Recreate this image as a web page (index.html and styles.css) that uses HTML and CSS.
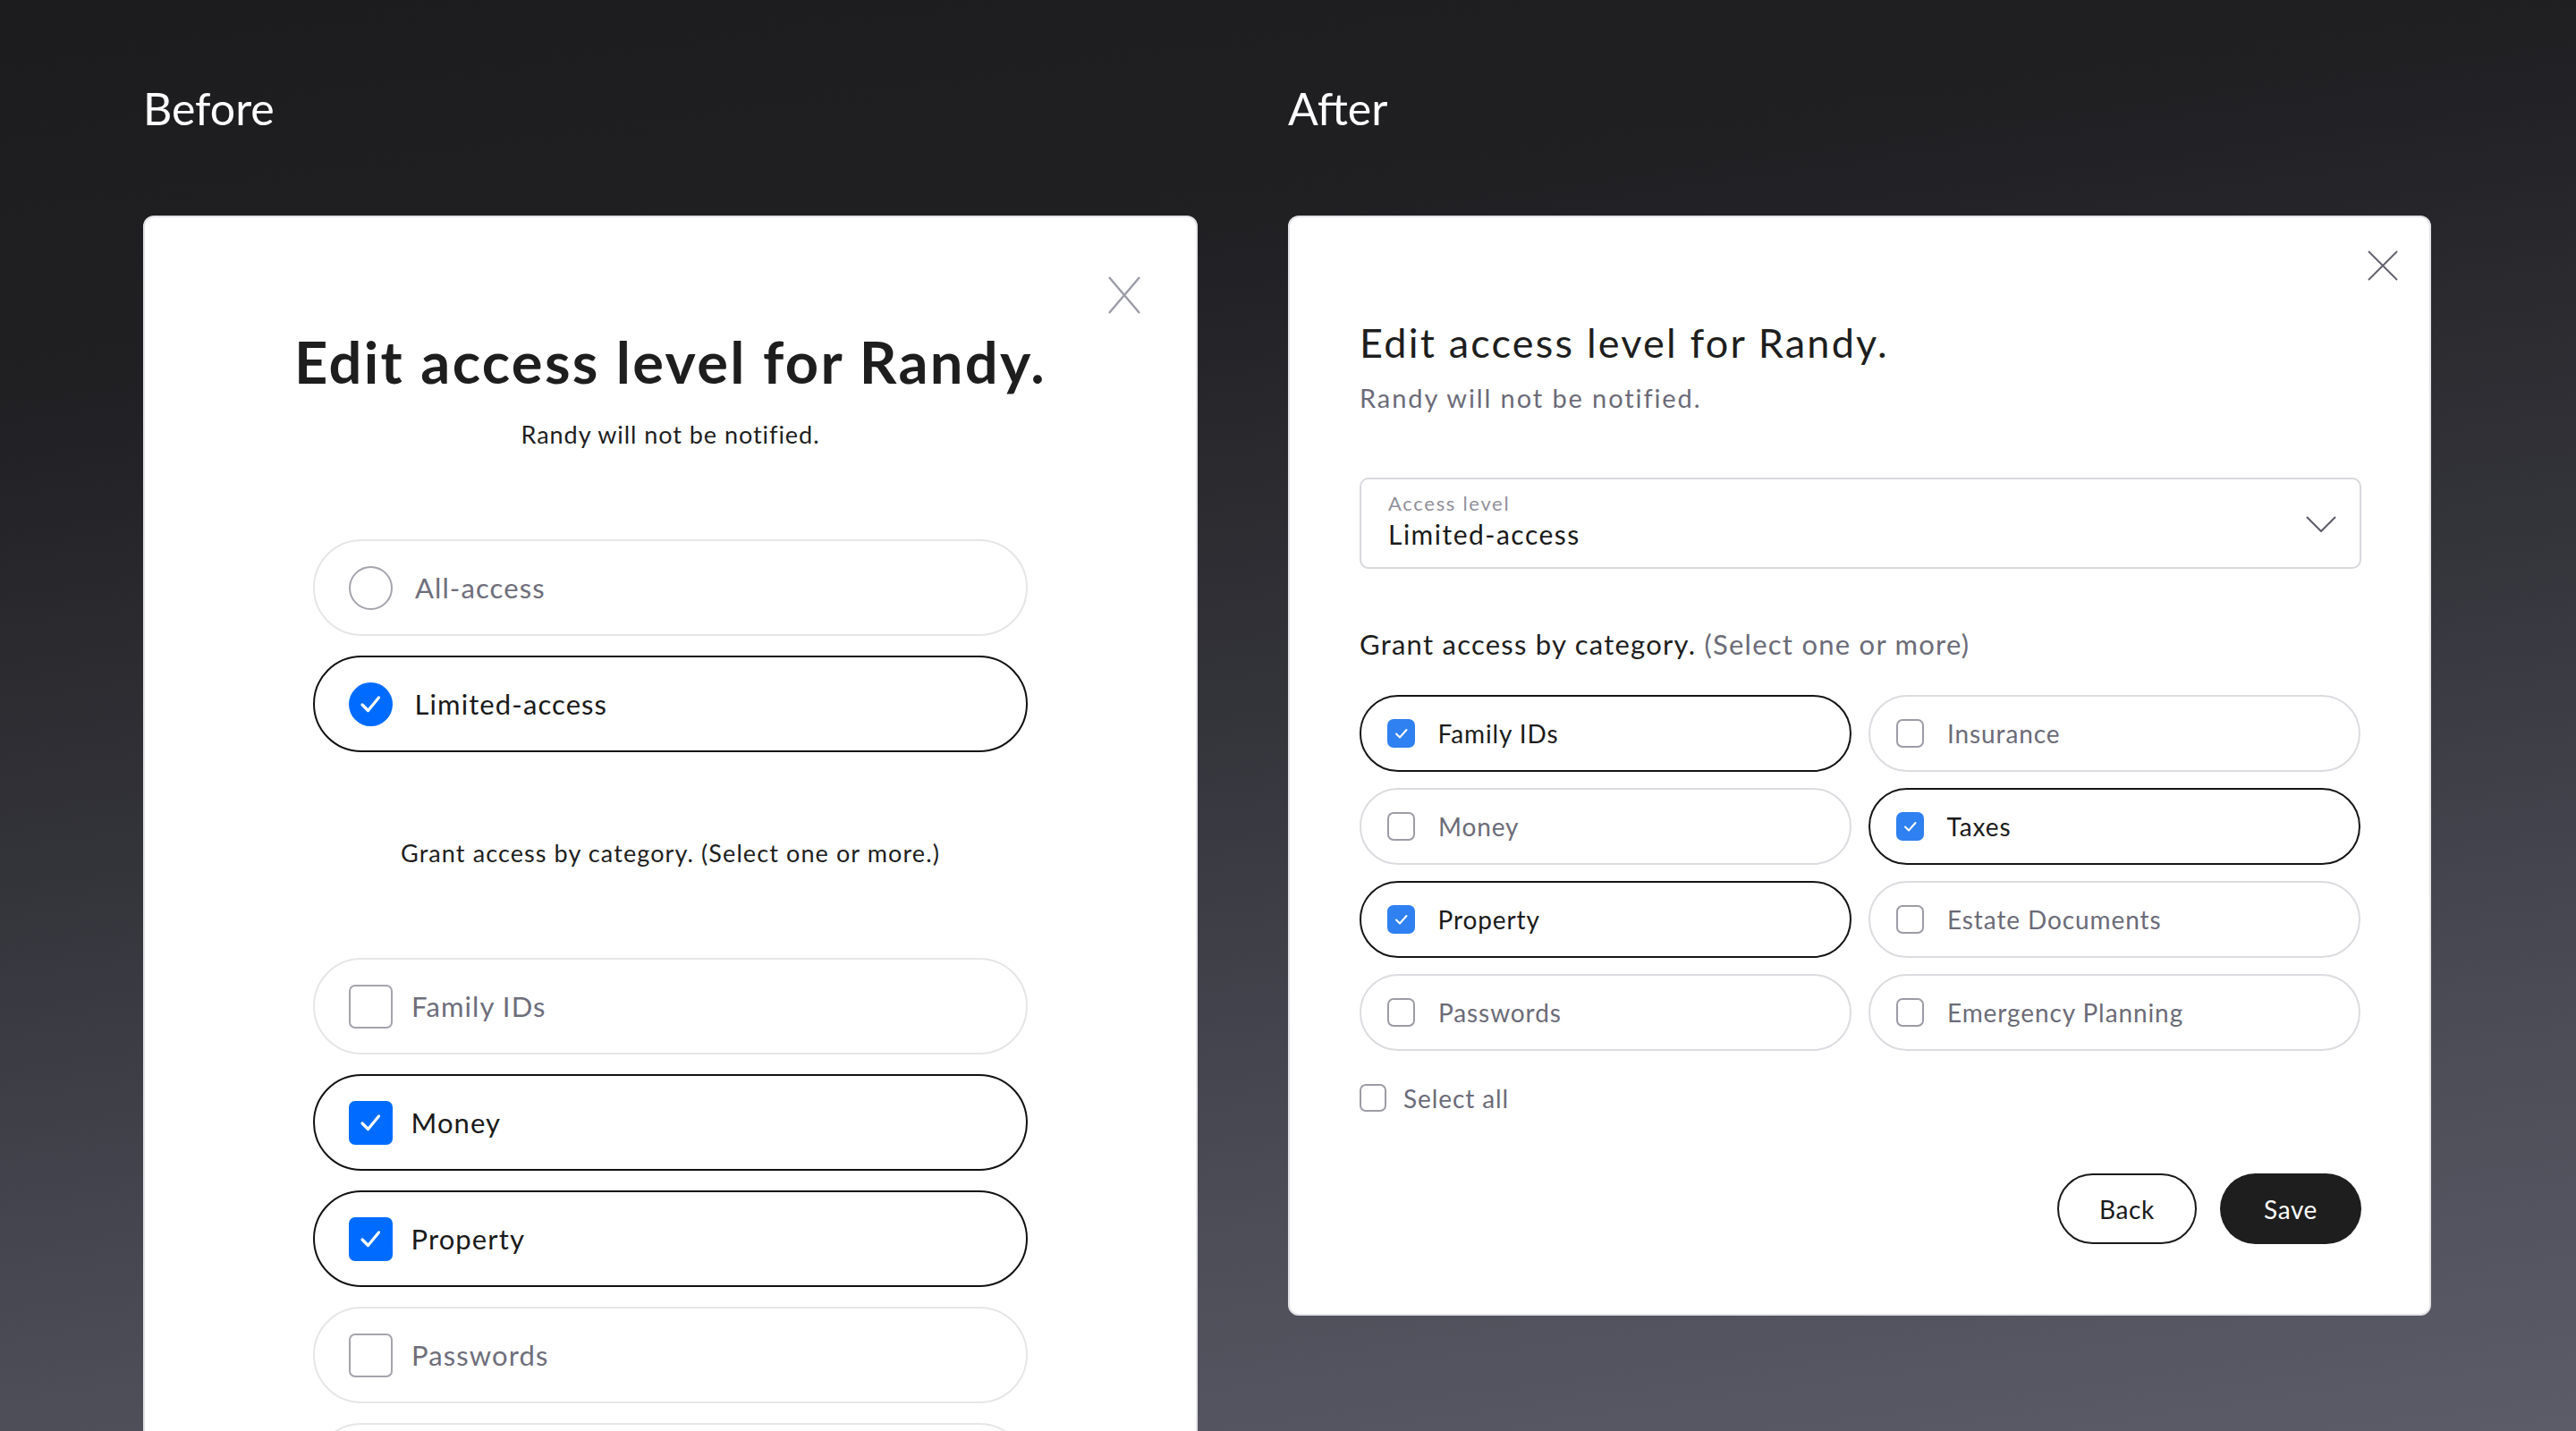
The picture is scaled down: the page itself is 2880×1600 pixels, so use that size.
FILE: index.html
```html
<!DOCTYPE html>
<html lang="en">
<head>
<meta charset="utf-8">
<title>Edit access level</title>
<link rel="stylesheet" href="styles.css">
</head>
<body>
<div class="page">
  <section class="col col-before">
    <h2 class="col-label">Before</h2>
    <div class="card card-before">
      <button class="close close-before" aria-label="Close">
        <svg viewBox="0 0 36 42" width="36" height="42"><path d="M1 1 L35 41 M35 1 L1 41" fill="none" stroke="#9b9ca7" stroke-width="2.4"/></svg>
      </button>
      <h1 class="b-title">Edit access level for Randy.</h1>
      <p class="b-sub">Randy will not be notified.</p>
      <div class="b-list">
        <div class="b-pill">
          <span class="b-radio"></span><span class="b-text">All-access</span>
        </div>
        <div class="b-pill is-on">
          <span class="b-radio is-on"><svg viewBox="0 0 49 49" width="49" height="49"><path d="M15 25 L21.5 31.5 L33.5 17" fill="none" stroke="#fff" stroke-width="3.2" stroke-linecap="round" stroke-linejoin="round"/></svg></span><span class="b-text">Limited-access</span>
        </div>
      </div>
      <p class="b-grant">Grant access by category. (Select one or more.)</p>
      <div class="b-list">
        <div class="b-pill">
          <span class="b-box"></span><span class="b-text b-text-c">Family IDs</span>
        </div>
        <div class="b-pill is-on">
          <span class="b-box is-on"><svg viewBox="0 0 49 49" width="49" height="49"><path d="M15 25 L21.5 31.5 L33.5 17" fill="none" stroke="#fff" stroke-width="3.2" stroke-linecap="round" stroke-linejoin="round"/></svg></span><span class="b-text b-text-c">Money</span>
        </div>
        <div class="b-pill is-on">
          <span class="b-box is-on"><svg viewBox="0 0 49 49" width="49" height="49"><path d="M15 25 L21.5 31.5 L33.5 17" fill="none" stroke="#fff" stroke-width="3.2" stroke-linecap="round" stroke-linejoin="round"/></svg></span><span class="b-text b-text-c">Property</span>
        </div>
        <div class="b-pill">
          <span class="b-box"></span><span class="b-text b-text-c">Passwords</span>
        </div>
        <div class="b-pill b-pill-edge"></div>
      </div>
    </div>
  </section>

  <section class="col col-after">
    <h2 class="col-label">After</h2>
    <div class="card card-after">
      <button class="close close-after" aria-label="Close">
        <svg viewBox="0 0 34 34" width="34" height="34"><path d="M1 1 L33 33 M33 1 L1 33" fill="none" stroke="#5f5f6b" stroke-width="1.8"/></svg>
      </button>
      <h1 class="a-title">Edit access level for Randy.</h1>
      <p class="a-sub">Randy will not be notified.</p>
      <div class="a-select">
        <div class="a-select-text">
          <span class="a-select-label">Access level</span>
          <span class="a-select-value">Limited-access</span>
        </div>
        <svg class="a-chev" viewBox="0 0 34 18" width="34" height="18"><path d="M1 1 L17 17 L33 1" fill="none" stroke="#5a5a68" stroke-width="2"/></svg>
      </div>
      <p class="a-grant">Grant access by category. <span class="muted">(Select one or more)</span></p>
      <div class="a-grid">
        <div class="a-pill is-on"><span class="a-box is-on"><svg viewBox="0 0 31 32" width="31" height="32"><path d="M10 16.5 L14 20.5 L21.5 12" fill="none" stroke="#fff" stroke-width="2" stroke-linecap="round" stroke-linejoin="round"/></svg></span><span class="a-text">Family IDs</span></div>
        <div class="a-pill"><span class="a-box"></span><span class="a-text">Insurance</span></div>
        <div class="a-pill"><span class="a-box"></span><span class="a-text">Money</span></div>
        <div class="a-pill is-on"><span class="a-box is-on"><svg viewBox="0 0 31 32" width="31" height="32"><path d="M10 16.5 L14 20.5 L21.5 12" fill="none" stroke="#fff" stroke-width="2" stroke-linecap="round" stroke-linejoin="round"/></svg></span><span class="a-text">Taxes</span></div>
        <div class="a-pill is-on"><span class="a-box is-on"><svg viewBox="0 0 31 32" width="31" height="32"><path d="M10 16.5 L14 20.5 L21.5 12" fill="none" stroke="#fff" stroke-width="2" stroke-linecap="round" stroke-linejoin="round"/></svg></span><span class="a-text">Property</span></div>
        <div class="a-pill"><span class="a-box"></span><span class="a-text">Estate Documents</span></div>
        <div class="a-pill"><span class="a-box"></span><span class="a-text">Passwords</span></div>
        <div class="a-pill"><span class="a-box"></span><span class="a-text">Emergency Planning</span></div>
      </div>
      <div class="a-selectall"><span class="a-box a-box-sm"></span><span class="a-text">Select all</span></div>
      <div class="a-actions">
        <button class="btn btn-back">Back</button>
        <button class="btn btn-save">Save</button>
      </div>
    </div>
  </section>
</div>
</body>
</html>
```

FILE: styles.css
```css
* { box-sizing: border-box; }
html, body { margin: 0; padding: 0; }
body {
  width: 2880px;
  height: 1600px;
  overflow: hidden;
  font-family: "Lato", "Noto Sans", sans-serif;
  background: linear-gradient(172deg, #1c1c1e 0%, #202023 22%, #34343b 50%, #4d4d58 78%, #5c5c69 100%);
  color: #1e1e1e;
}
.page {
  display: flex;
  gap: 101px;
  padding-left: 160px;
  height: 1600px;
  overflow: hidden;
}
.col { display: flex; flex-direction: column; }
.col-before { width: 1179px; }
.col-after { width: 1278px; }
.col-label {
  margin: 91px 0 0 0;
  font-size: 50px;
  line-height: 60px;
  font-weight: 400;
  color: #ffffff;
  height: 60px;
}
.card {
  position: relative;
  margin-top: 90px;
  background: #fff;
  border: 2px solid #e3e3e7;
  border-radius: 12px;
}
.close {
  position: absolute;
  background: none;
  border: 0;
  padding: 0;
  display: block;
}
.close svg { display: block; }

/* BEFORE */
.card-before {
  display: flex;
  flex-direction: column;
  align-items: center;
  padding-top: 122px;
  min-height: 1500px;
}
.close-before { top: 66px; right: 62px; }
.b-title {
  margin: 0;
  font-size: 65px;
  line-height: 78px;
  font-weight: 700;
  letter-spacing: 2.35px;
}
.b-sub {
  margin: 27px 0 0;
  font-size: 27px;
  line-height: 32px;
  letter-spacing: 0.95px;
}
.b-list {
  display: flex;
  flex-direction: column;
  gap: 22px;
  width: 799px;
  margin-top: 101px;
}
.b-pill {
  height: 108px;
  border: 2px solid #e6e6e9;
  border-radius: 54px;
  display: flex;
  align-items: center;
  padding-left: 38px;
  flex: none;
}
.b-pill.is-on { border: 2.5px solid #111; padding-left: 37.5px; }
.b-radio, .b-box {
  width: 49px;
  height: 49px;
  border: 2px solid #a4a4ae;
  flex: none;
  display: flex;
  align-items: center;
  justify-content: center;
}
.b-radio { border-radius: 50%; }
.b-box { border-radius: 7px; }
.b-radio.is-on, .b-box.is-on { background: #006cff; border: 0; }
.b-radio svg, .b-box svg { display: block; }
.b-text {
  margin-left: 25px;
  font-size: 31px;
  letter-spacing: 1.1px;
  color: #6e6e7b;
}
.b-text-c { margin-left: 21px; }
.b-pill.is-on .b-text { color: #1a1a1a; }
.b-grant {
  margin: 97px 0 0;
  font-size: 27px;
  line-height: 32px;
  letter-spacing: 1.1px;
}
.b-grant + .b-list { margin-top: 101px; }

/* AFTER */
.card-after {
  height: 1230px;
  padding: 113px 76px 0 78px;
}
.close-after { top: 37px; right: 35px; }
.a-title {
  margin: 0;
  font-size: 45px;
  line-height: 54px;
  font-weight: 400;
  letter-spacing: 2.2px;
}
.a-sub {
  margin: 18px 0 0;
  font-size: 29px;
  line-height: 34px;
  letter-spacing: 1.9px;
  color: #6b6b78;
}
.a-select {
  margin-top: 72px;
  height: 102px;
  border: 2px solid #d8d8dd;
  border-radius: 10px;
  display: flex;
  align-items: center;
  justify-content: space-between;
  padding: 0 26px 0 30px;
}
.a-select-text { display: flex; flex-direction: column; padding-bottom: 5px; }
.a-select-label { font-size: 22px; line-height: 25px; letter-spacing: 1.7px; color: #8f8f99; }
.a-select-value { font-size: 30px; line-height: 35px; margin-top: 5px; letter-spacing: 1.5px; color: #1a1a1a; }
.a-chev { display: block; margin-top: 2px; }
.a-grant {
  margin: 66px 0 0;
  font-size: 31px;
  line-height: 37px;
  letter-spacing: 1.25px;
  color: #1e1e1e;
}
.muted { color: #6b6b78; }
.a-grid {
  margin-top: 38px;
  display: grid;
  grid-template-columns: 550px 550px;
  column-gap: 19px;
  row-gap: 18px;
}
.a-pill {
  height: 86px;
  border: 2px solid #dcdce0;
  border-radius: 43px;
  display: flex;
  align-items: center;
  padding-left: 29px;
}
.a-pill.is-on { border: 2.5px solid #151515; padding-left: 28.5px; }
.a-box {
  width: 31px;
  height: 32px;
  border: 2px solid #9c9ca6;
  border-radius: 7px;
  flex: none;
  display: flex;
  align-items: center;
  justify-content: center;
}
.a-box.is-on { background: #2f80f0; border: 0; }
.a-box svg { display: block; }
.a-text {
  margin-left: 26px;
  font-size: 28px;
  letter-spacing: 0.9px;
  color: #6b6b78;
}
.a-pill.is-on .a-text { color: #1a1a1a; }
.a-selectall {
  margin-top: 37px;
  display: flex;
  align-items: center;
  height: 31px;
}
.a-box-sm { width: 30px; height: 31px; }
.a-selectall .a-text { margin-left: 19px; }
.a-actions {
  margin-top: 69px;
  display: flex;
  justify-content: flex-end;
  gap: 26px;
}
.btn {
  height: 79px;
  border-radius: 40px;
  font-family: "Lato", "Noto Sans", sans-serif;
  font-size: 28px;
  letter-spacing: 0.6px;
  padding: 0;
}
.btn-back {
  width: 156px;
  background: #fff;
  border: 2px solid #1a1a1a;
  color: #1a1a1a;
}
.btn-save {
  width: 158px;
  background: #1e1e1e;
  border: 0;
  color: #fff;
}
```
